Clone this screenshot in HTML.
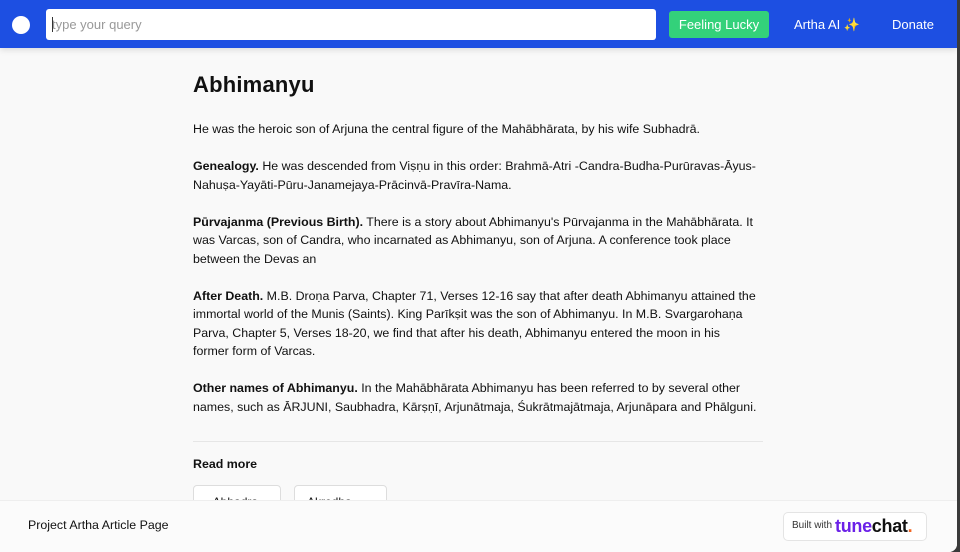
<!DOCTYPE html>
<html><head><meta charset="utf-8"><style>
*{box-sizing:border-box;margin:0;padding:0}
html,body{width:960px;height:552px;overflow:hidden;background:#3a3a3a}
#wrap{position:absolute;left:0;top:0;width:957px;height:552px;background:#f9f9f9;border-bottom-right-radius:8px;overflow:hidden;font-family:"Liberation Sans",sans-serif;color:#111}
#hdr{position:absolute;left:0;top:0;width:957px;height:48px;background:#1d4fe2;box-shadow:0 2px 6px rgba(0,0,0,.12)}
.circ{position:absolute;left:12px;top:16px;width:18px;height:18px;border-radius:50%;background:#fff}
.inp{position:absolute;left:46px;top:9px;width:610px;height:31px;background:#fff;border-radius:3px;font-size:13px;color:#999;padding:8px 0 0 6px}
.inp:before{content:"";position:absolute;left:6px;top:8px;width:1px;height:15px;background:#333}
.lucky{position:absolute;left:669px;top:11px;width:100px;height:27px;background:#33d17a;border-radius:3px;color:#fff;font-size:13px;text-align:center;line-height:27px}
.nav{position:absolute;top:17px;color:#fff;font-size:13px}
#main{position:absolute;left:193px;top:0;width:572px;font-size:12.4px;line-height:18.5px}
h1{position:absolute;top:76px;font-size:22px;font-weight:bold;letter-spacing:.2px}
p{margin:0}
.div{position:absolute;top:441px;left:0;width:570px;height:1px;background:#e6e6e6}
.btn{position:absolute;top:485px;height:30px;border:1px solid #ddd;border-radius:4px;background:#fff;font-size:12px;padding:7px 12px}
#ftr{position:absolute;left:0;top:500px;width:957px;height:52px;background:#fbfbfb;border-top:1px solid #eee}
.bw{position:absolute;left:783px;top:11px;width:144px;height:29px;border:1px solid #e4e4e4;border-radius:5px;background:#fff}
</style></head><body><div id="wrap">
<div id="hdr"><div class="circ"></div><div class="inp">type your query</div><div class="lucky">Feeling Lucky</div><div class="nav" style="left:794px">Artha AI ✨</div><div class="nav" style="left:892px">Donate</div></div>
<div id="main">
<h1>Abhimanyu</h1>
<div style="position:absolute;top:120px;width:568px">
<p>He was the heroic son of Arjuna the central figure of the Mahābhārata, by his wife Subhadrā.</p><br>
<p><b>Genealogy.</b> He was descended from Viṣṇu in this order: Brahmā-Atri -Candra-Budha-Purūravas-Āyus-<br>Nahuṣa-Yayāti-Pūru-Janamejaya-Prācinvā-Pravīra-Nama.</p><br>
<p><b>Pūrvajanma (Previous Birth).</b> There is a story about Abhimanyu's Pūrvajanma in the Mahābhārata. It<br>was Varcas, son of Candra, who incarnated as Abhimanyu, son of Arjuna. A conference took place<br>between the Devas an</p><br>
<p><b>After Death.</b> M.B. Droṇa Parva, Chapter 71, Verses 12-16 say that after death Abhimanyu attained the<br>immortal world of the Munis (Saints). King Parīkṣit was the son of Abhimanyu. In M.B. Svargarohaṇa<br>Parva, Chapter 5, Verses 18-20, we find that after his death, Abhimanyu entered the moon in his<br>former form of Varcas.</p><br>
<p><b>Other names of Abhimanyu.</b> In the Mahābhārata Abhimanyu has been referred to by several other<br>names, such as ĀRJUNI, Saubhadra, Kārṣṇī, Arjunātmaja, Śukrātmajātmaja, Arjunāpara and Phālguni.</p>
</div>
<div class="div"></div>
<div style="position:absolute;top:455px;font-weight:bold;font-size:12.4px">Read more</div>
<div class="btn" style="left:0;width:88px">‹ Abhadra</div>
<div class="btn" style="left:101px;width:93px">Akrodha ›</div>
</div>
<div id="ftr"><div style="position:absolute;left:28px;top:17px;font-size:12.4px">Project Artha Article Page</div>
<div class="bw"><span style="position:absolute;left:8px;top:7px;font-size:10px;color:#333">Built with</span><span style="position:absolute;left:51px;top:3px;font-size:18px;line-height:20px;font-weight:bold;letter-spacing:-.3px"><span style="color:#6b21e8">tune</span><span style="color:#111">chat</span><span style="color:#f26522">.</span></span></div></div>
</div></body></html>
